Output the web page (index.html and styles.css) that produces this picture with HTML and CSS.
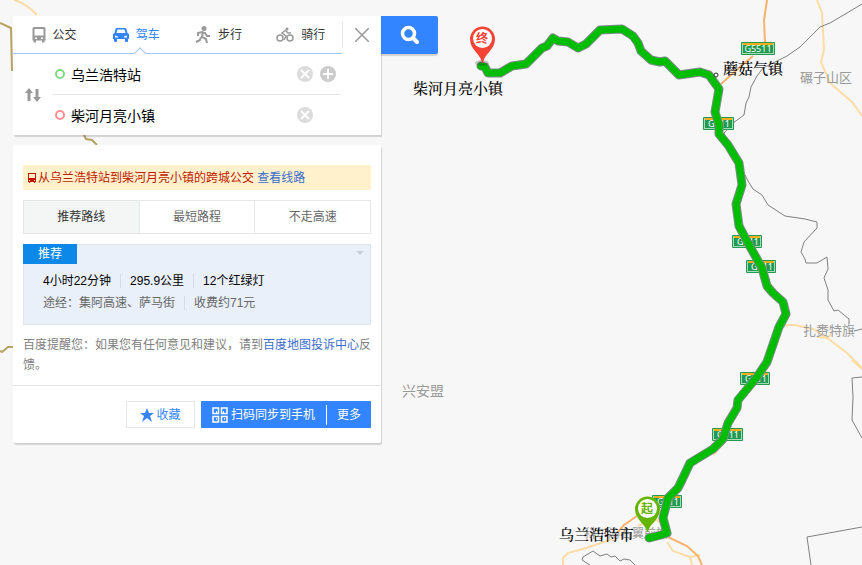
FILE: index.html
```html
<!DOCTYPE html>
<html lang="zh-CN">

<head>
    <meta charset="utf-8" />
    <meta name="viewport" content="width=device-width" />
    <title>百度地图</title>
    <link rel="stylesheet" href="styles.css">
</head>
<body>
    <!-- Map start -->
    <svg class="map" viewBox="0 0 862 565" preserveAspectRatio="xMinYMin slice" role="img" aria-label="地图">
        <g class="border-line">
            <path d="M0 23L11 28L12 70H14" />
            <path d="M84 135L86 139L92 140L97 145" />
            <path d="M0 351L2 352L8 347L14 347" />
        </g>
        <g class="road">
            <path d="M14 0Q26 3 37 15" />
            <path d="M817 0L822 13L824 50L821 62L830 83L852 102L862 116" />
            <path d="M781 327L788 325L795 325L813 329L830 340L847 353L862 368" />
            <path d="M817 337L828 338L832 333" />
            <path d="M852 360L862 369" />
            <path d="M563 565L563 558L568 553L583 549L607 541L616 538" />
            <path d="M638 526L648 521L658 520L663 527" />
            <path d="M667 542L673 551L690 557L692 565M690 557L700 555" />
            <path d="M713 455L724 443" />
        </g>
        <g class="road road-main">
            <path d="M767 0L764 20L765 42M753 56L740 67L721 84" />
            <path d="M618 532L624 525L637 516" />
            <path d="M668 537L687 546L698 556L702 565" />
        </g>
        <g class="rail">
            <path d="M862 4L847 13L830 23L820 27L800 47L787 56L763 68L757 76L751 87L749 97L746 103L744 115L733 123L724 133L728 145L739 163L748 181L753 189L762 195L768 205L785 216L805 219L817 222L817 228L804 242L801 252L805 259L806 263L817 263L827 257L828 269L824 278L828 290L828 300L834 311L838 310L849 319L849 324M854 331L862 329" />
            <path d="M862 377L852 378L853 397L852 420L862 438" />
            <path d="M862 527L807 537L811 565" />
            <path d="M590 565L582 560L583 557L593 551L600 556L607 554L611 557L615 556L620 561L624 559L630 560L635 565" />
        </g>

        <g class="label label-minor">
            <text x="800" y="82">碾子山区</text>
            <text x="803" y="335">扎赉特旗</text>
            <text class="label-area" x="402" y="396">兴安盟</text>
            <text class="label-under" x="584" y="538">科尔沁右翼前旗</text>
        </g>

        <g class="shield">
            <g transform="translate(741 42)"><rect class="shield-bg" width="34" height="13" rx="1" /><rect class="shield-rim" x="1.500" y="1.500" width="31" height="10" /><path d="M2 2H32" /><text x="17" y="10">G5511</text></g>
            <g transform="translate(703 117)"><rect class="shield-bg" width="31" height="13" rx="1" /><rect class="shield-rim" x="1.500" y="1.500" width="28" height="10" /><path d="M2 2H29" /><text x="16" y="10">G111</text></g>
            <g transform="translate(732 235)"><rect class="shield-bg" width="30" height="13" rx="1" /><rect class="shield-rim" x="1.500" y="1.500" width="27" height="10" /><path d="M2 2H28" /><text x="16" y="10">G111</text></g>
            <g transform="translate(746 260)"><rect class="shield-bg" width="30" height="13" rx="1" /><rect class="shield-rim" x="1.500" y="1.500" width="27" height="10" /><path d="M2 2H28" /><text x="16" y="10">G111</text></g>
            <g transform="translate(740 372)"><rect class="shield-bg" width="30" height="13" rx="1" /><rect class="shield-rim" x="1.500" y="1.500" width="27" height="10" /><path d="M2 2H28" /><text x="16" y="10">G111</text></g>
            <g transform="translate(712 428)"><rect class="shield-bg" width="31" height="13" rx="1" /><rect class="shield-rim" x="1.500" y="1.500" width="28" height="10" /><path d="M2 2H29" /><text x="16" y="10">G111</text></g>
            <g transform="translate(652 495)"><rect class="shield-bg" width="30" height="13" rx="1" /><rect class="shield-rim" x="1.500" y="1.500" width="27" height="10" /><path d="M2 2H28" /><text x="16" y="10">G111</text></g>
        </g>

        <!-- Route -->
        <defs>
            <path id="route" d="M481 66L485 67L488 73L500 73L512 66L526 64L542 48L547 46L553 38L558 41L568 42L578 48L586 44L600 30L622 29L633 36L638 43L641 51L651 60L660 62L665 61L679 75L700 72L709 75L719 89L715 112L719 125L719 134L728 145L739 163L742 185L736 204L739 226L748 243L762 268L767 286L773 293L783 302L786 314L779 327L767 362L757 377L738 400L737 408L728 423L723 439L713 449L690 463L681 482L678 488L668 498L663 518L667 533L661 535L649 538" />
        </defs>
        <use href="#route" class="route-edge" />
        <use href="#route" class="route-line" />

        <circle class="town-dot" cx="716" cy="75" r="2" />
        <g class="label label-main">
            <text x="413" y="94">柴河月亮小镇</text>
            <text x="723" y="74">蘑菇气镇</text>
            <text x="559" y="540">乌兰浩特市</text>
        </g>

        <!-- Pins -->
        <ellipse class="pin-shadow" cx="482" cy="63" rx="7" ry="3" />
        <g class="pin pin-end">
            <path d="M482 63C481 54 470 50 470 39A12.500 12.500 0 0 1 495 39C495 50 484 54 483 63Z" />
            <circle cx="482.500" cy="38.500" r="9.500" />
            <text x="482" y="43">终</text>
        </g>
        <g class="pin pin-start">
            <path d="M647 532C646 524 635 520 635 509A12.500 12.500 0 0 1 660 509C660 520 649 524 648 532Z" />
            <circle cx="647.500" cy="508.500" r="9.500" />
            <text x="647" y="513">起</text>
        </g>
    </svg>
    <!-- Map end -->

    <main class="container">
        <!-- Search form start -->
        <form class="search">
            <div class="search-box">
                <div class="search-top">
                    <nav class="modes">
                        <button type="button" class="mode">
                            <svg width="14" height="16" viewBox="0 0 14 16"><path fill-rule="evenodd" d="M2 0h10q1.500 0 1.500 1.500v12h-1v2h-2.500v-2h-6v2h-2.500v-2h-1v-12q0-1.500 1.500-1.500zM2.500 2v6.500h9v-6.500zM3 10.500v1.500h2v-1.500zM9 10.500v1.500h2v-1.500z" /></svg>公交
                        </button>
                        <button type="button" class="mode active">
                            <svg width="16" height="16" viewBox="0 0 16 16"><path fill-rule="evenodd" d="M4 1h8q1 0 1.500 1l1 4 1.500 1v5h-1v2q0 1-1 1h-1q-1 0-1-1v-2h-8v2q0 1-1 1h-1q-1 0-1-1v-2h-1v-5l1.500-1 1-4q.5-1 1.500-1zM4.500 2.500l-1 3.500h9l-1-3.500zM2 8.500v2h3v-1zM14 8.500l-3 1v1h3z" /></svg>驾车
                        </button>
                        <button type="button" class="mode">
                            <svg width="16" height="18" viewBox="0 0 16 18"><circle cx="9" cy="2.500" r="2.500" /><path class="limb" d="M3 10V7L7 6L10 7L12 10L15 10M8 6L7 11L11 13L12 17M6 11L5 14L1 16" /></svg>步行
                        </button>
                        <button type="button" class="mode">
                            <svg width="18" height="16" viewBox="0 0 18 16"><circle cx="11" cy="2" r="1.500" /><g class="wheel"><circle cx="4" cy="11" r="3" /><circle cx="14" cy="11" r="3" /><path d="M10 3L6 6L10 9L8 13M10 4L12 6H15" /></g></svg>骑行
                        </button>
                    </nav>
                    <button type="button" class="close" aria-label="关闭">
                        <svg width="14" height="14" viewBox="0 0 14 14"><path d="M0 0L14 14M14 0L0 14" /></svg>
                    </button>
                </div>
                <div class="points">
                    <button type="button" class="swap" aria-label="交换起点终点">
                        <svg width="18" height="14" viewBox="0 0 18 14"><path d="M5 0L9 5H6.500V13H3.500V5H1ZM13 14L9 9H11.500V1H14.500V9H17Z" /></svg>
                    </button>
                    <div class="point-list">
                        <div class="point">
                            <span class="ring ring-start"></span>
                            <input id="start" type="text" value="乌兰浩特站" aria-label="起点" />
                            <button type="button" class="round" aria-label="清空起点"><svg width="16" height="16" viewBox="0 0 16 16"><path d="M4 4L12 12M12 4L4 12" /></svg></button>
                            <button type="button" class="round round-add" aria-label="添加途经点"><svg width="16" height="16" viewBox="0 0 16 16"><path d="M8 3V13M3 8H13" /></svg></button>
                        </div>
                        <div class="point">
                            <span class="ring ring-end"></span>
                            <input id="end" type="text" value="柴河月亮小镇" aria-label="终点" />
                            <button type="button" class="round" aria-label="清空终点"><svg width="16" height="16" viewBox="0 0 16 16"><path d="M4 4L12 12M12 4L4 12" /></svg></button>
                        </div>
                    </div>
                </div>
            </div>
            <button type="submit" class="search-button" aria-label="搜索">
                <svg width="20" height="20" viewBox="0 0 20 20"><circle cx="8.500" cy="8.500" r="6" /><path d="M13.500 13.500L17 17" /></svg>
            </button>
        </form>
        <!-- Search form end -->

        <!-- Result start -->
        <section class="result">
            <p class="bus-tip">
                <svg width="10" height="12" viewBox="0 0 10 12"><path fill-rule="evenodd" d="M1 1h8v9h-1v1h-1v-1h-4v1h-1v-1h-1zM2 2v4h6v-4zM2 8v1h1v-1zM7 8v1h1v-1z" /></svg><span>从乌兰浩特站到柴河月亮小镇的跨城公交 <a href="#">查看线路</a></span>
            </p>
            <div class="plans">
                <button type="button" class="active">推荐路线</button>
                <button type="button">最短路程</button>
                <button type="button">不走高速</button>
            </div>
            <div class="plan">
                <div class="plan-head">
                    <span class="tag">推荐</span>
                    <span class="arrow"></span>
                </div>
                <div class="plan-row plan-main"><span>4小时22分钟</span><span>295.9公里</span><span>12个红绿灯</span></div>
                <div class="plan-row plan-sub"><span>途经：集阿高速、萨马街</span><span>收费约71元</span></div>
            </div>
            <p class="notice">百度提醒您：如果您有任何意见和建议，请到<a href="#">百度地图投诉中心</a>反馈。</p>
            <div class="actions">
                <button type="button" class="fav">
                    <svg width="14" height="14" viewBox="0 0 14 14"><path d="M7 0L9 5L14 5L10 8L12 14L7 10L2 14L4 8L0 5L5 5Z" /></svg>收藏
                </button>
                <div class="send">
                    <button type="button" class="scan">
                        <svg width="16" height="16" viewBox="0 0 16 16"><path d="M1 1H6.500V6.500H1ZM9.500 1H15V6.500H9.500ZM1 9.500H6.500V15H1ZM9.500 9.500H15V15H9.500ZM4 5H5M11 5H12M4 12H5M12 12H13" /></svg>扫码同步到手机
                    </button>
                    <button type="button" class="more">更多</button>
                </div>
            </div>
        </section>
        <!-- Result end -->
    </main>
</body>

</html>
```
FILE: styles.css
```css
:root {
    --primary-color: #3385ff;
    --map-color: #f7f7f7;
    --border-color: #e4e6e7;
    --link-color: #3d6dcc;
    --icon-color: #999;
    --font-family: "Liberation Sans", "Noto Sans CJK SC", sans-serif;
}

* {
    box-sizing: border-box;
    margin: 0;
    padding: 0;
}

body {
    position: relative;
    min-height: 100vh;
    overflow: hidden;
    background-color: var(--map-color);
    font-family: var(--font-family);
    font-size: 12px;
    line-height: 20px;
}

a {
    color: var(--link-color);
    text-decoration: none;
}

button {
    border: 0;
    background: none;
    font: inherit;
    color: inherit;
    cursor: pointer;
}

svg {
    display: block;
    flex: none;
}

/* Map */
.map {
    position: absolute;
    top: 0;
    left: 0;
    width: 100%;
    height: 100%;
}

.border-line {
    fill: none;
    stroke: #b5a264;
    stroke-width: 2;
}

.road {
    fill: none;
    stroke: #fddca6;
    stroke-width: 2;
}

.road-main {
    stroke: #fbb36b;
}

.rail {
    fill: none;
    stroke: #808080;
}

.label-main {
    font-size: 15px;
    font-weight: 500;
    fill: #000;
    font-family: "Liberation Serif", "Noto Serif CJK SC", "Noto Sans CJK SC", serif;
}

.label-minor {
    font-size: 13px;
    fill: #999;
}

.label-area {
    font-size: 14px;
}

.label-under {
    font-size: 12px;
}

.shield-bg {
    fill: #229a51;
}

.shield-rim {
    fill: none;
    stroke: #a8dcb8;
}

.shield path {
    stroke: #ffae1a;
    stroke-width: 2;
}

.shield text {
    fill: #fff;
    font-size: 9px;
    font-family: "Noto Sans", sans-serif;
    text-anchor: middle;
}

.route-edge,
.route-line {
    fill: none;
    stroke-linejoin: round;
    stroke-linecap: round;
}

.route-edge {
    stroke: #7c8b87;
    stroke-width: 9;
}

.route-line {
    stroke: #00bd00;
    stroke-width: 7;
}

.town-dot {
    fill: #fff;
    stroke: #222;
}

.pin-shadow {
    fill: #000;
    opacity: .2;
}

.pin circle {
    fill: #fff;
}

.pin text {
    font-size: 12px;
    font-weight: 700;
    text-anchor: middle;
}

.pin-end {
    fill: #f54336;
}

.pin-start {
    fill: #65b500;
}

/* Search form */
.container {
    position: relative;
    padding: 16px 13px;
}

.search {
    display: flex;
    align-items: flex-start;
}

.search-box {
    width: 368px;
    background-color: #fff;
    border-radius: 2px 0 0 2px;
    box-shadow: 1px 2px 1px rgba(0, 0, 0, .15);
}

.search-top {
    display: flex;
    height: 38px;
}

.modes {
    display: flex;
    flex: 1;
    border-bottom: 1px solid #a3c6ff;
}

.mode {
    position: relative;
    display: flex;
    flex: 1;
    align-items: center;
    justify-content: center;
    gap: 7px;
    color: #333;
}

.mode svg {
    fill: var(--icon-color);
}

.mode .limb,
.wheel {
    fill: none;
    stroke: var(--icon-color);
    stroke-width: 2;
}

.mode .wheel {
    stroke-width: 1.5;
}

.mode.active {
    color: var(--primary-color);
}

.mode.active svg {
    fill: var(--primary-color);
}

.mode.active::after {
    content: "";
    position: absolute;
    bottom: -4px;
    left: 50%;
    width: 7px;
    height: 7px;
    border: 1px solid #a3c6ff;
    border-width: 1px 0 0 1px;
    background-color: #fff;
    transform: rotate(45deg);
}

.close {
    display: flex;
    align-items: center;
    justify-content: center;
    width: 39px;
    margin: 6px 0;
    border-left: 1px solid var(--border-color);
}

.close path {
    stroke: var(--icon-color);
    stroke-width: 1.5;
}

.points {
    display: flex;
    padding-right: 40px;
}

.swap {
    padding-left: 11px;
    width: 39px;
    fill: var(--icon-color);
}

.point-list {
    flex: 1;
}

.point {
    display: flex;
    align-items: center;
    gap: 7px;
    height: 40px;
    padding: 0 5px 0 3px;
}

.point:first-child {
    border-bottom: 1px solid var(--border-color);
    height: 41px;
}

.ring {
    width: 10px;
    height: 10px;
    border: 2px solid #80d984;
    border-radius: 50%;
}

.ring-end {
    border-color: #ff8f8f;
}

.point input {
    flex: 1;
    min-width: 0;
    height: 30px;
    margin-left: -1px;
    border: 0;
    outline: none;
    background: none;
    font-family: inherit;
    font-size: 14px;
    line-height: 28px;
    color: #000;
}

.round {
    border-radius: 50%;
    background-color: #dcdcdc;
}

.round:nth-of-type(1):last-child {
    margin-right: 23px;
}

.round-add {
    background-color: #ccc;
}

.round path {
    stroke: #fff;
    stroke-width: 2;
}

.search-button {
    display: flex;
    align-items: center;
    justify-content: center;
    width: 57px;
    height: 38px;
    border-radius: 0 2px 2px 0;
    background-color: var(--primary-color);
    box-shadow: 0 2px 1px rgba(0, 0, 0, .15);
}

.search-button svg {
    fill: none;
    stroke: #fff;
    stroke-width: 4;
    stroke-linecap: round;
}

.search-button circle {
    stroke-width: 3.5;
}

/* Result */
.result {
    width: 368px;
    margin-top: 10px;
    padding-top: 20px;
    background-color: #fff;
    border-radius: 2px;
    box-shadow: 1px 2px 1px rgba(0, 0, 0, .15);
}

.bus-tip {
    display: flex;
    align-items: center;
    height: 25px;
    margin: 0 10px 10px;
    padding-left: 4px;
    background-color: #fff1cc;
    color: #c01800;
    white-space: nowrap;
}

.bus-tip svg {
    margin-right: 1px;
    fill: #c01800;
}

.plans {
    display: flex;
    height: 34px;
    margin: 0 10px 10px;
    border: 1px solid var(--border-color);
}

.plans button {
    flex: 1;
    color: #666;
}

.plans button + button {
    border-left: 1px solid var(--border-color);
}

.plans .active {
    background-color: #f4f6f5;
    color: #333;
}

.plan {
    margin: 0 10px;
    padding-bottom: 11px;
    background-color: #e9f0fa;
    box-shadow: inset 0 0 0 1px #e1e5ea;
}

.plan-head {
    display: flex;
    justify-content: space-between;
    margin-bottom: 6px;
}

.tag {
    width: 54px;
    background-color: #0c88e8;
    color: #fff;
    text-align: center;
}

.arrow {
    margin: 7px 7px 0 0;
    border: 4px solid transparent;
    border-top-color: #ccd0d6;
    border-bottom: 0;
    height: 4px;
}

.plan-row {
    display: flex;
    align-items: center;
    height: 22px;
    padding-left: 20px;
    line-height: 14px;
}

.plan-row span + span {
    margin-left: 9px;
    padding-left: 9px;
    border-left: 1px solid #d6dbe1;
}

.plan-main {
    color: #000;
}

.plan-sub {
    color: #666;
}

.notice {
    padding: 10px 6px 10px 10px;
    color: #808080;
}

.actions {
    display: flex;
    justify-content: flex-end;
    gap: 6px;
    padding: 15px 10px;
    border-top: 1px solid var(--border-color);
}

.fav {
    display: flex;
    align-items: center;
    justify-content: center;
    gap: 2px;
    width: 69px;
    height: 27px;
    border: 1px solid var(--border-color);
    color: var(--primary-color);
    fill: var(--primary-color);
}

.send {
    display: flex;
    align-items: center;
    width: 170px;
    height: 27px;
    border-radius: 1px;
    background-color: var(--primary-color);
    color: #fff;
}

.scan {
    display: flex;
    flex: 1;
    align-items: center;
    justify-content: center;
    gap: 3px;
}

.scan path {
    fill: none;
    stroke: #fff;
    stroke-width: 1.5;
}

.more {
    width: 45px;
    border-left: 1px solid #fff;
}
```
